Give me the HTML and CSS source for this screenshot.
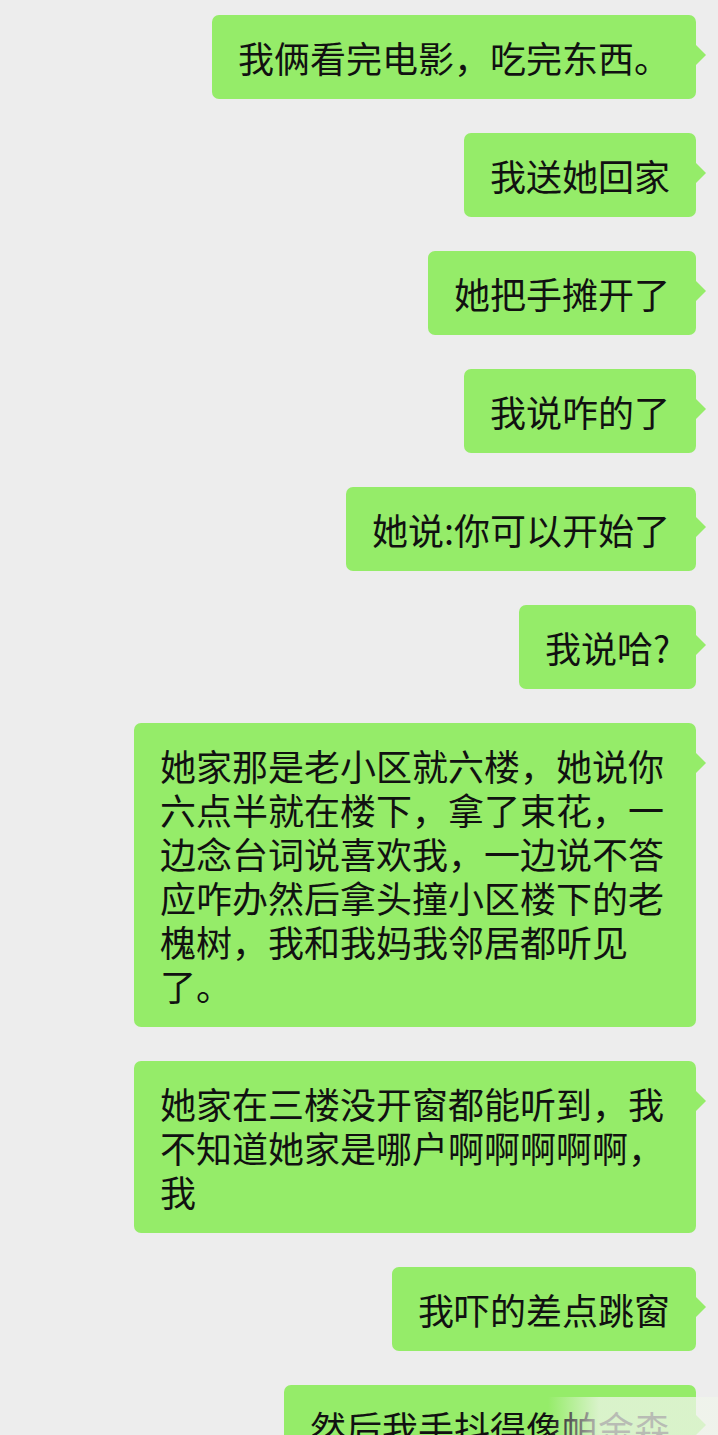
FILE: index.html
```html
<!DOCTYPE html>
<html lang="zh-CN">
<head>
  <meta charset="UTF-8" />
  <title>聊天记录</title>
  <link rel="stylesheet" href="styles.css">
</head>
<body>

  <div class="chat">
    <div class="bubble">我俩看完电影，吃完东西。</div>
    <div class="bubble">我送她回家</div>
    <div class="bubble">她把手摊开了</div>
    <div class="bubble">我说咋的了</div>
    <div class="bubble">她说:你可以开始了</div>
    <div class="bubble">我说哈?</div>
    <div class="bubble">她家那是老小区就六楼，她说你六点半就在楼下，拿了束花，一边念台词说喜欢我，一边说不答应咋办然后拿头撞小区楼下的老槐树，我和我妈我邻居都听见了。</div>
    <div class="bubble">她家在三楼没开窗都能听到，我不知道她家是哪户啊啊啊啊啊，我</div>
    <div class="bubble">我吓的差点跳窗</div>
    <div class="bubble">然后我手抖得像帕金森</div>
  </div>

  <!-- mancha do marca d'agua no canto -->
  <div class="watermark"></div>

</body>
</html>
```

FILE: styles.css
```css
body {
  background-color: #ededed;
  color: #111;
  font-family: "Noto Sans CJK SC", "Noto Sans", sans-serif;
  margin: 0;
  height: 1435px;
  overflow: hidden;
  position: relative;
}

.chat {
  display: flex;
  flex-direction: column;
  align-items: flex-end;
  gap: 34px;
  padding: 15px 22px 0 0;
}

.bubble {
  position: relative;
  box-sizing: border-box;
  max-width: 562px;
  padding: 20px 26px 20px 26px;
  background-color: #95ec69;
  border-radius: 7px;
  font-size: 36px;
  line-height: 44px;
}

/* rabinho do balao */
.bubble::after {
  content: "";
  position: absolute;
  right: -10px;
  top: 30px;
  border-top: 10px solid transparent;
  border-bottom: 10px solid transparent;
  border-left: 10px solid #95ec69;
}

.watermark {
  position: absolute;
  right: 0;
  bottom: 0;
  width: 170px;
  height: 38px;
  background: linear-gradient(to right, rgba(255, 255, 255, 0), rgba(240, 245, 235, 0.75) 30%, rgba(240, 245, 235, 0.75));
}
```
